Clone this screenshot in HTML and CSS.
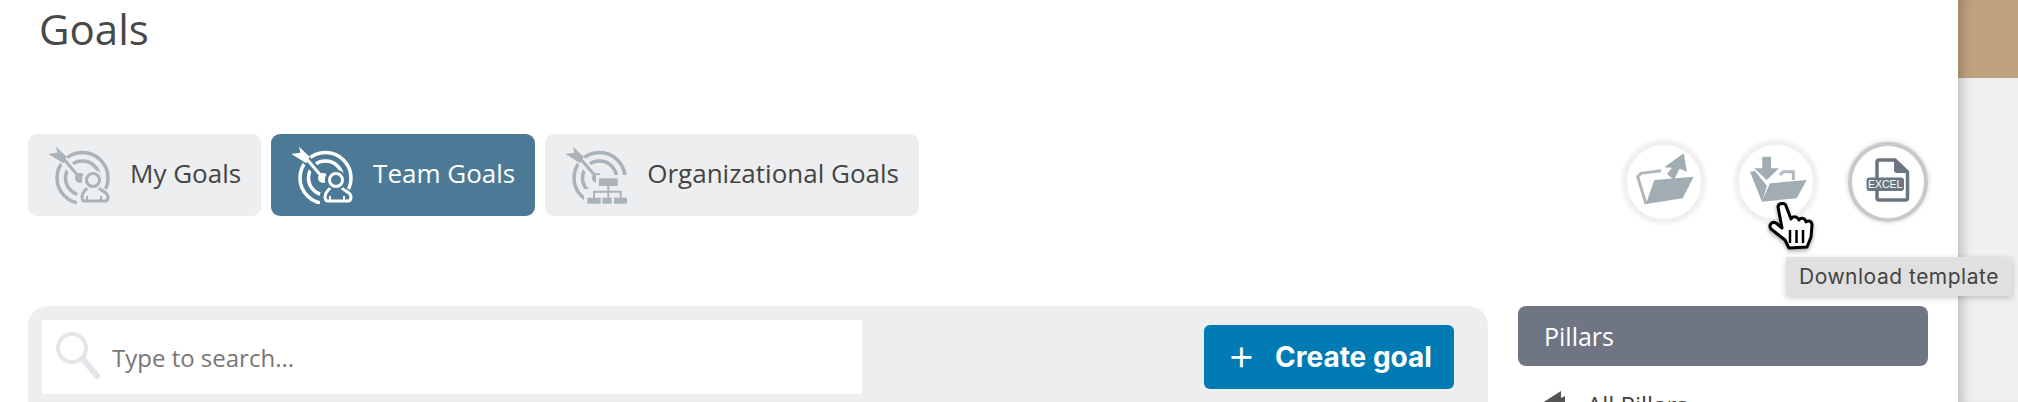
FILE: index.html
```html
<!DOCTYPE html>
<html lang="en">
<head>
  <meta charset="UTF-8">
  <title>Goals</title>
  <link rel="stylesheet" href="styles.css">
</head>
<body>
  <svg class="defs" width="0" height="0">
    <symbol id="rings" viewBox="0 0 62 58">
      <circle cx="34.500" cy="32" r="25.500" class="ring"/>
      <circle cx="34.500" cy="32" r="17" class="ring"/>
      <path d="M10 8L32 32" class="shaft-gap"/>
      <circle cx="32" cy="32" r="5" class="dot"/>
      <path d="M14 11L32 32" class="shaft"/>
      <path d="M0.300 8L9.300 6.700L8 0.700L18.700 10.700L15.300 17.300Z" class="tail"/>
    </symbol>
    <symbol id="person" viewBox="0 0 62 58">
      <path d="M29 58V49C29 45 34 42 36 40C35 38 34 36 34 34C34 28 38 24 45 24C51 24 55 28 55 34C55 36 54 38 53 40C56 42 62 45 62 49V58Z" class="gap"/>
      <circle cx="45" cy="34" r="6.500" class="outline"/>
      <path d="M39 42C37 45 34 46 34 51C34 54 35 55 37 55H57C59 55 60 54 60 51C60 46 53 45 51 42" class="outline"/>
      <path d="M39 55V50M53 55V50" class="outline thin"/>
    </symbol>
  </svg>

  <div class="page">
    <main class="main">
      <h1 class="title">Goals</h1>

      <div class="toolbar">
        <div class="tabs">
          <a class="tab">
            <svg class="tab-icon" viewBox="0 0 62 58">
              <use href="#rings"/>
              <use href="#person"/>
            </svg>
            <span>My Goals</span>
          </a>
          <a class="tab active">
            <svg class="tab-icon" viewBox="0 0 62 58">
              <use href="#rings"/>
              <use href="#person"/>
            </svg>
            <span>Team Goals</span>
          </a>
          <a class="tab">
            <svg class="tab-icon" viewBox="0 0 62 58">
              <use href="#rings"/>
              <path d="M31 29H62V58H19V43H31Z" class="gap"/>
              <rect x="34" y="32.300" width="18.700" height="7.700" class="solid"/>
              <path d="M43.300 40V51.700M29 51.700V45.700H55.700V51.700" class="outline thin"/>
              <rect x="22.300" y="51.700" width="13.400" height="6" class="solid"/>
              <rect x="37.300" y="51.700" width="9.400" height="6" class="solid"/>
              <rect x="49" y="51.700" width="13" height="6" class="solid"/>
            </svg>
            <span>Organizational Goals</span>
          </a>
        </div>

        <div class="actions">
          <button class="round-btn">
            <svg viewBox="0 0 80 80" class="action-icon">
              <path d="M22 62L13.700 34.700L17 31.300L37 28.700" class="folder-line"/>
              <path d="M30.300 38L69.700 34.700L58.700 56.300L22 62Z" class="folder-fill"/>
              <path d="M59.700 11.300L63 29.700L55.500 26.800L50 38L43 32L48 25.800L40.300 25.300Z" class="folder-fill"/>
            </svg>
          </button>
          <button class="round-btn">
            <svg viewBox="0 0 80 80" class="action-icon">
              <path d="M26.300 14.700H35V26.300H43L30.700 38L18.300 26.300H26.300Z" class="folder-fill"/>
              <path d="M14 29.700L19 29L31 44L26 60Z" class="folder-fill"/>
              <path d="M44 33L47.300 29.700H57.300V38" class="folder-line"/>
              <path d="M34 41.300L70.700 38L60.700 56.300L25.700 59.700Z" class="folder-fill"/>
            </svg>
          </button>
          <button class="round-btn excel">
            <svg viewBox="0 0 80 80" class="action-icon">
              <path d="M29 36V20C29 18.500 30 18 31 18H47L59.500 30V56C59.500 57.500 58.500 58 57.500 58H31C30 58 29 57.500 29 56V48" class="doc"/>
              <path d="M46 17L60 31H49C47 31 46 30 46 28Z" class="doc-fold"/>
              <rect x="18.500" y="35.500" width="37.500" height="13.500" rx="3" class="doc-fold"/>
              <text x="37.200" y="46" class="excel-label">EXCEL</text>
            </svg>
          </button>
        </div>
      </div>

      <div class="content">
        <section class="search-panel">
          <label class="search">
            <svg class="search-icon" viewBox="0 0 46 50">
              <circle cx="16" cy="16" r="14"/>
              <path d="M27 27L41 44" class="search-handle"/>
            </svg>
            <span class="placeholder">Type to search...</span>
          </label>
          <button class="create-btn"><span class="plus">+</span>Create goal</button>
        </section>

        <aside class="pillars">
          <h2 class="pillars-head">Pillars</h2>
          <div class="pillar-item">
            <svg class="pillar-icon" viewBox="0 0 29 24">
              <path d="M2 24V15L24 1V8L28 6V24Z"/>
            </svg>
            <span>All Pillars</span>
          </div>
        </aside>
      </div>
    </main>

    <div class="side">
      <div class="side-top"></div>
    </div>
  </div>

  <div class="tooltip">Download template</div>

  <svg class="cursor" viewBox="0 0 48 50">
    <path d="M10 5C10 1 17 0 18 4L23 17C25 14 29 14 31 18C33 15 37 16 38 20C40 18 44 19 44 23L43 35L39 45L21 46L17 38L3 27C0 23 4 19 8 21L14 26Z" class="hand"/>
    <path d="M22 28V41M28.500 28V41M35 28V41" class="hand-lines"/>
  </svg>
</body>
</html>
```

FILE: styles.css
```css
html, body {
  margin: 0;
  padding: 0;
  height: 402px;
  overflow: hidden;
  background: #fff;
  font-family: "Open Sans", sans-serif;
  color: #444;
}
.defs {
  position: absolute;
}
.page {
  display: flex;
  height: 402px;
}
.main {
  width: 1958px;
  box-sizing: border-box;
  padding: 0 30px 0 28px;
  background: #fff;
  flex-shrink: 0;
  overflow: hidden;
}
.title {
  margin: 0 0 0 11px;
  height: 134px;
  font-size: 42px;
  line-height: 58px;
  font-weight: 400;
  color: #484848;
}

/* tabs + round buttons */
.toolbar {
  display: flex;
  justify-content: space-between;
  align-items: flex-start;
  height: 172px;
}
.tabs {
  display: flex;
  gap: 10px;
}
.tab {
  --tab-bg: #edeef0;
  display: flex;
  align-items: center;
  gap: 20px;
  height: 82px;
  padding: 0 20px 5px;
  box-sizing: border-box;
  border-radius: 9px;
  background: var(--tab-bg);
  color: #444;
  font-size: 26px;
}
.tab.active {
  --tab-bg: #4c7a96;
  color: #fff;
}
.tab-icon {
  width: 62px;
  height: 58px;
  margin-top: 5px;
  color: #a9b3b9;
}
.tab.active .tab-icon {
  color: #fff;
}
.ring {
  fill: none;
  stroke: currentColor;
  stroke-width: 3.500;
}
.dot, .tail, .solid {
  fill: currentColor;
}
.shaft {
  fill: none;
  stroke: currentColor;
  stroke-width: 3;
}
.shaft-gap {
  fill: none;
  stroke: var(--tab-bg);
  stroke-width: 9;
}
.gap {
  fill: var(--tab-bg);
}
.outline {
  fill: none;
  stroke: currentColor;
  stroke-width: 3;
}
.outline.thin {
  stroke-width: 2;
}

.actions {
  display: flex;
  gap: 32px;
  margin-top: 8px;
}
.round-btn {
  width: 80px;
  height: 80px;
  padding: 0;
  border: 3px solid #f0f0f0;
  border-radius: 50%;
  background: #fff;
  box-sizing: border-box;
  box-shadow: 0 0 3px 3px rgba(0, 0, 0, 0.05);
}
.round-btn.excel {
  border: 4px solid #c9c9c9;
  box-shadow: 0 0 5px rgba(0, 0, 0, 0.2);
}
.action-icon {
  display: block;
  width: 80px;
  height: 80px;
  margin: -3px;
}
.excel .action-icon {
  margin: -4px;
}
.folder-fill {
  fill: #a2adb3;
}
.folder-line {
  fill: none;
  stroke: #aeb8bd;
  stroke-width: 3;
}
.doc {
  fill: none;
  stroke: #6b7682;
  stroke-width: 3.500;
}
.doc-fold {
  fill: #6b7682;
}
.excel-label {
  fill: #fff;
  font-family: "Liberation Sans", sans-serif;
  font-size: 10.500px;
  text-anchor: middle;
}

/* search + pillars */
.content {
  display: flex;
  justify-content: space-between;
  align-items: flex-start;
}
.search-panel {
  display: flex;
  justify-content: space-between;
  align-items: flex-start;
  width: 1460px;
  height: 140px;
  padding: 14px 34px 0 14px;
  box-sizing: border-box;
  border-radius: 20px;
  background: #edeef0;
}
.search {
  display: flex;
  align-items: center;
  gap: 10px;
  width: 820px;
  height: 74px;
  padding-left: 14px;
  box-sizing: border-box;
  background: #fff;
}
.search-icon {
  width: 46px;
  height: 50px;
  fill: none;
  stroke: #e3e5ea;
  stroke-width: 4;
}
.search-handle {
  stroke-width: 6;
  stroke-linecap: round;
}
.placeholder {
  font-size: 24px;
  color: #777;
}
.create-btn {
  display: flex;
  align-items: center;
  width: 250px;
  height: 64px;
  margin-top: 5px;
  padding: 0 0 0 23px;
  border: 0;
  border-radius: 6px;
  background: #007bb3;
  color: #fff;
  font-family: Inter, sans-serif;
  font-size: 28px;
  font-weight: 700;
  white-space: nowrap;
}
.plus {
  width: 48px;
  padding-bottom: 7px;
  text-align: left;
  font-size: 44px;
  font-weight: 300;
  line-height: 1;
}
.pillars {
  width: 410px;
}
.pillars-head {
  margin: 0;
  height: 60px;
  padding-left: 26px;
  border-radius: 8px;
  background: #707583;
  color: #fff;
  font-size: 25px;
  font-weight: 400;
  line-height: 60px;
}
.pillar-item {
  display: flex;
  align-items: flex-start;
  gap: 21px;
  margin-top: 22px;
  padding-left: 19px;
  font-size: 24px;
  color: #444;
}
.pillar-icon {
  width: 29px;
  height: 24px;
  margin-top: 2px;
  fill: #555;
}

/* right strip behind the panel */
.side {
  flex: 1;
  background: #f0f0f0;
  box-shadow: inset 12px 0 12px -8px rgba(0, 0, 0, 0.22);
}
.side-top {
  height: 78px;
  background: #c0a27f;
  box-shadow: inset 12px 0 12px -8px rgba(0, 0, 0, 0.22);
}

/* hover overlays */
.tooltip {
  position: absolute;
  left: 1786px;
  top: 257px;
  width: 226px;
  height: 39px;
  box-sizing: border-box;
  background: #e0e0e0;
  border-radius: 2px;
  box-shadow: 0 2px 6px rgba(0, 0, 0, 0.2);
  color: #444;
  font-family: Inter, sans-serif;
  font-size: 21px;
  letter-spacing: 0.500px;
  line-height: 39px;
  text-align: center;
}
.cursor {
  position: absolute;
  left: 1768px;
  top: 202px;
  width: 48px;
  height: 50px;
  filter: drop-shadow(0 2px 2px rgba(0, 0, 0, 0.35));
}
.hand {
  fill: #fff;
  stroke: #000;
  stroke-width: 3;
  stroke-linejoin: round;
}
.hand-lines {
  fill: none;
  stroke: #000;
  stroke-width: 2.500;
}
```
